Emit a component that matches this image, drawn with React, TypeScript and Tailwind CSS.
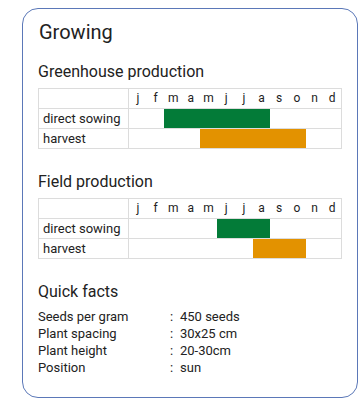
import React from "react";

const MONTHS = ["j", "f", "m", "a", "m", "j", "j", "a", "s", "o", "n", "d"];

type Row = { label: string; start: number; end: number; color: string };

const greenhouse: Row[] = [
  { label: "direct sowing", start: 3, end: 8, color: "bg-[#037b38]" },
  { label: "harvest", start: 5, end: 10, color: "bg-[#e39200]" },
];
const field: Row[] = [
  { label: "direct sowing", start: 6, end: 8, color: "bg-[#037b38]" },
  { label: "harvest", start: 8, end: 10, color: "bg-[#e39200]" },
];

function Calendar({ rows }: { rows: Row[] }) {
  return (
    <div className="w-[304px] border-t border-l border-[#dcdcdc] text-[13px] text-[#222]">
      <div className="flex h-[20px] border-b border-[#dcdcdc]">
        <div className="w-[90px] shrink-0 border-r border-[#dcdcdc]" />
        <div className="grid flex-1 grid-cols-12 border-r border-[#dcdcdc] text-[12px] leading-[19px]">
          {MONTHS.map((m, i) => (
            <div key={i} className="text-center">
              {m}
            </div>
          ))}
        </div>
      </div>
      {rows.map((r) => (
        <div key={r.label} className="flex h-[20px] border-b border-[#dcdcdc]">
          <div className="w-[90px] shrink-0 border-r border-[#dcdcdc] pl-[4px] leading-[19px]">
            {r.label}
          </div>
          <div className="grid flex-1 grid-cols-12 border-r border-[#dcdcdc]">
            <div
              className={r.color}
              style={{ gridColumn: `${r.start} / ${r.end + 1}` }}
            />
          </div>
        </div>
      ))}
    </div>
  );
}

const facts = [
  ["Seeds per gram", "450 seeds"],
  ["Plant spacing", "30x25 cm"],
  ["Plant height", "20-30cm"],
  ["Position", "sun"],
];

export default function App() {
  return (
    <div className="w-[360px] h-[408px] bg-white pt-[8px] pl-[22px] font-['Roboto',sans-serif] text-[#222]">
      <div className="w-[336px] h-[390px] rounded-[16px] border border-[#5b78b8] px-[15px] pt-[9px]">
        <h1 className="text-[20px] leading-[28px] pl-[1px]">Growing</h1>

        <h2 className="mt-[14px] text-[16px] leading-[24px]">Greenhouse production</h2>
        <div className="mt-[4px]">
          <Calendar rows={greenhouse} />
        </div>

        <h2 className="mt-[21px] text-[16px] leading-[24px]">Field production</h2>
        <div className="mt-[4px]">
          <Calendar rows={field} />
        </div>

        <h2 className="mt-[21px] text-[16px] leading-[24px]">Quick facts</h2>
        <div className="mt-[4px] grid grid-cols-[132px_8px_1fr] text-[13px] leading-[17px]">
          {facts.map(([k, v]) => (
            <React.Fragment key={k}>
              <div>{k}</div>
              <div>:</div>
              <div className="pl-[2px]">{v}</div>
            </React.Fragment>
          ))}
        </div>
      </div>
    </div>
  );
}
